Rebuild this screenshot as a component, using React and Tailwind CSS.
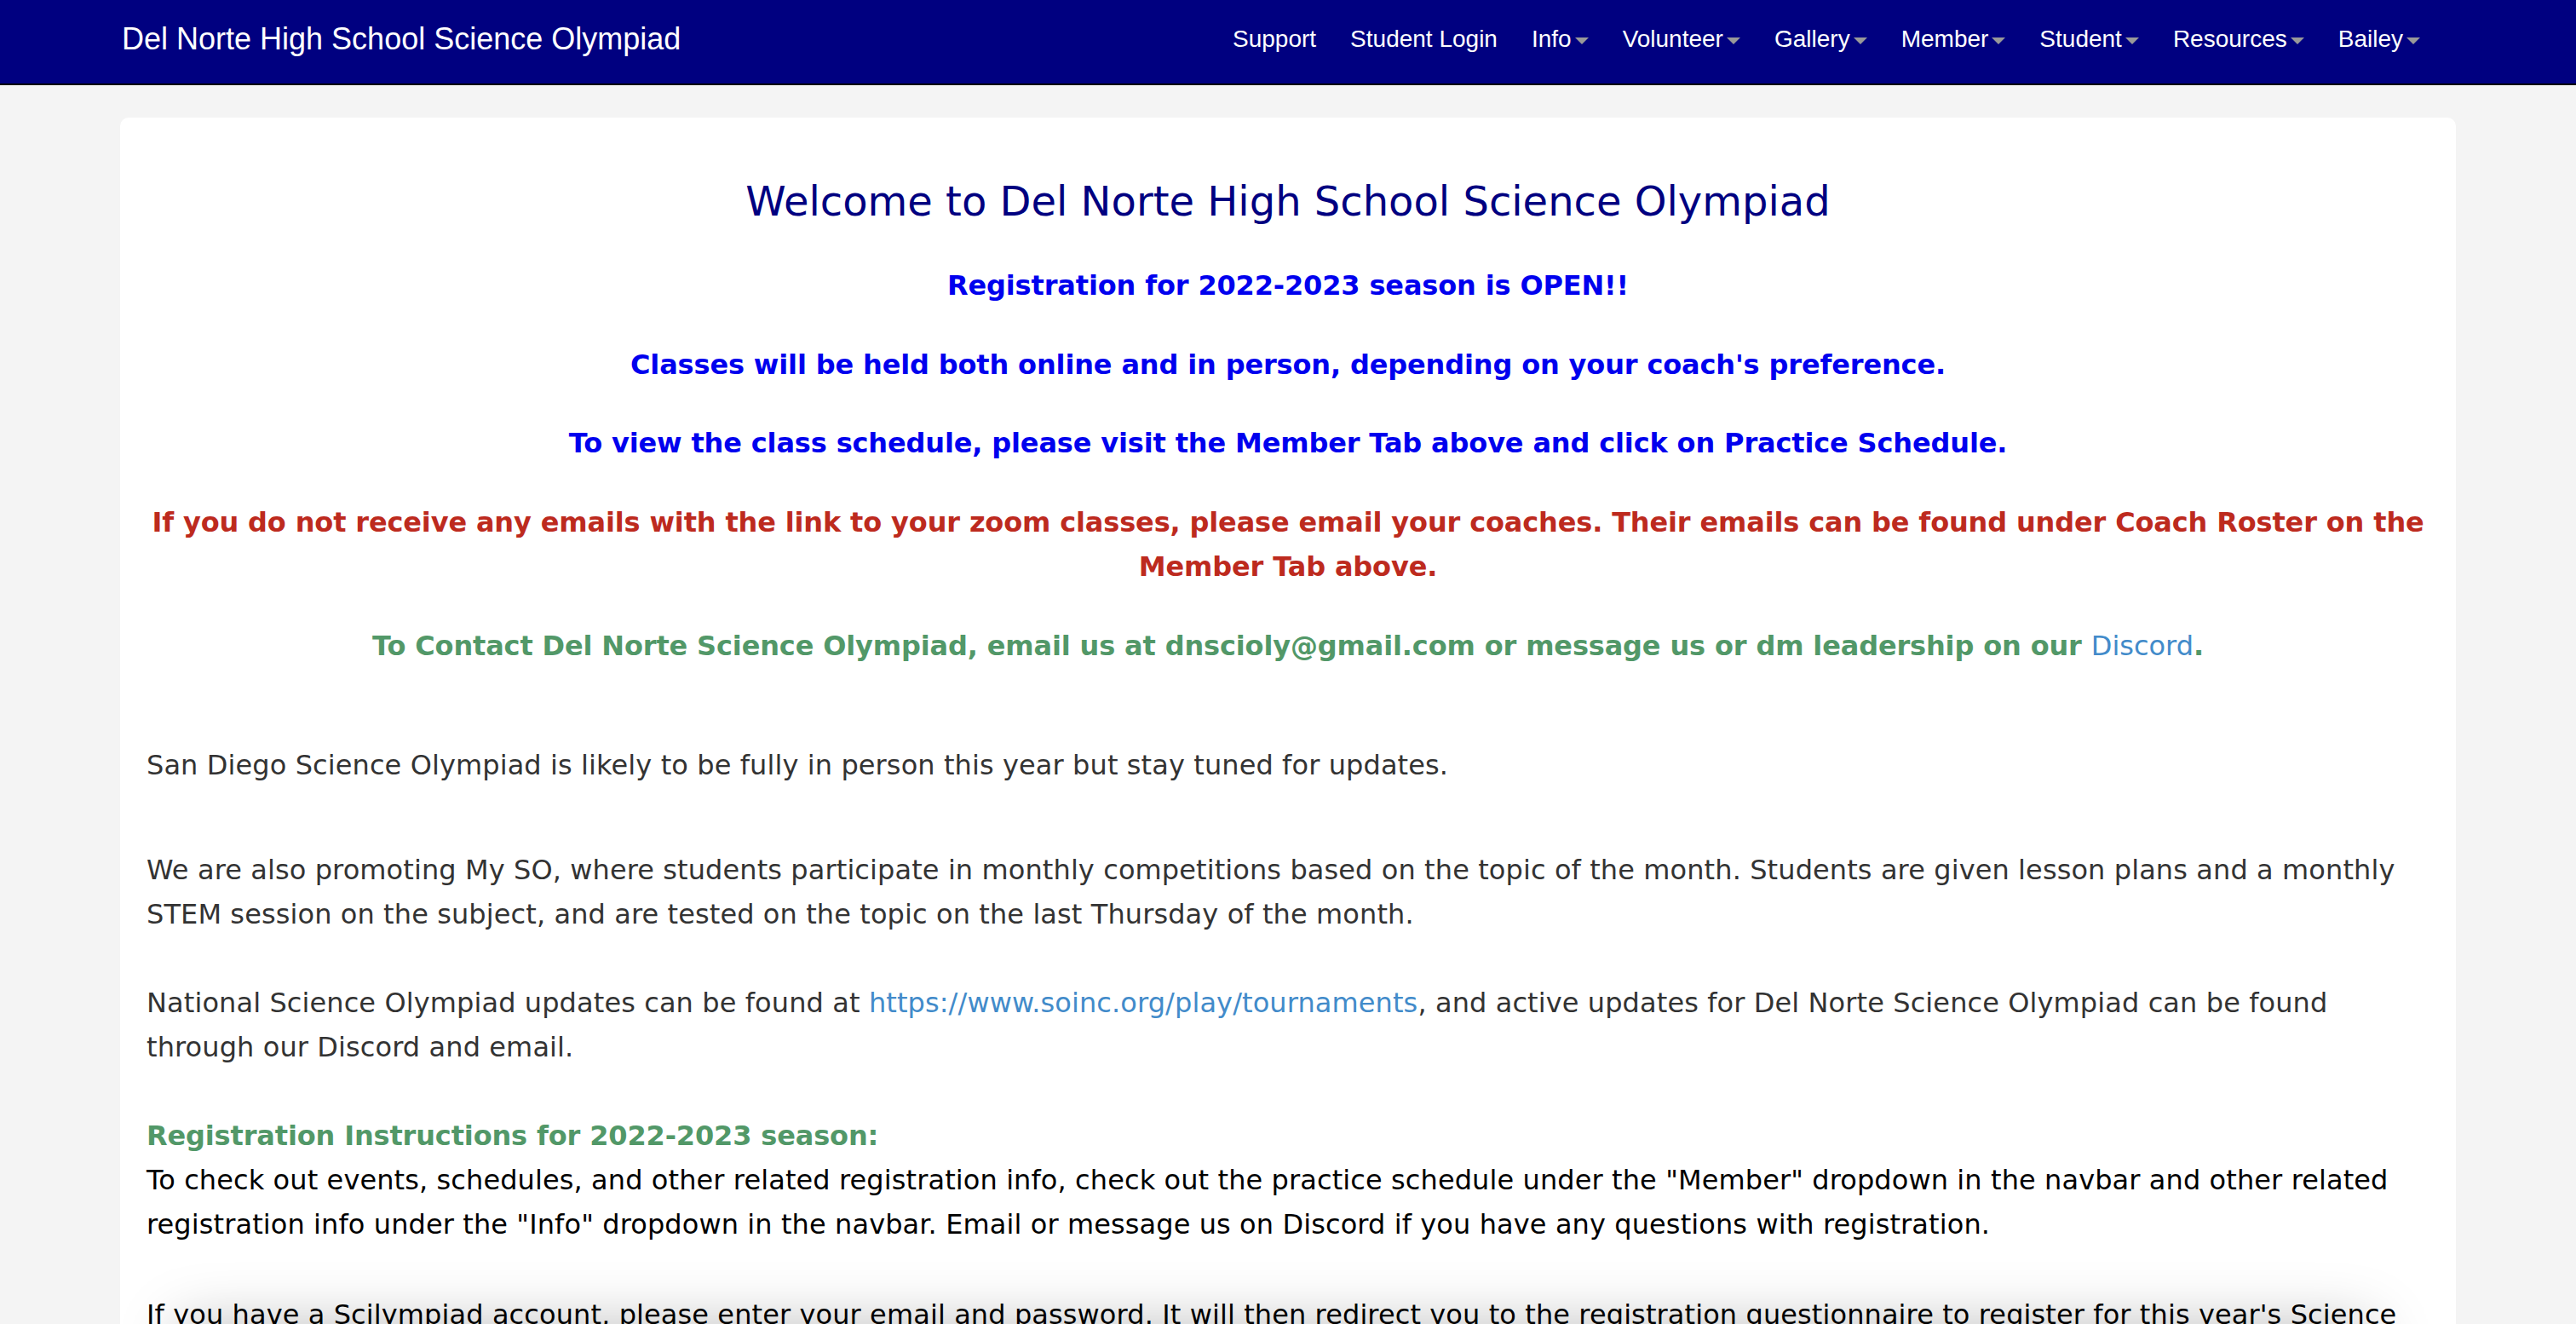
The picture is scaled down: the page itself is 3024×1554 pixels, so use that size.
const NAV = [
  { label: "Support" },
  { label: "Student Login" },
  { label: "Info", caret: true },
  { label: "Volunteer", caret: true },
  { label: "Gallery", caret: true },
  { label: "Member", caret: true },
  { label: "Student", caret: true },
  { label: "Resources", caret: true },
  { label: "Bailey", caret: true },
];

function Caret() {
  return (
    <span className="ml-[4px] inline-block h-0 w-0 align-middle border-t-[8px] border-t-[#999] border-x-[8px] border-x-transparent" />
  );
}

export default function App() {
  return (
    <div className="relative h-[1554px] overflow-hidden bg-[#f4f4f4] font-['DejaVu_Sans',Verdana,sans-serif]">
      {/* navbar */}
      <nav className="flex h-[100px] justify-between border-b-2 border-black bg-[#000080] pl-[143px] pr-[163px] font-['Liberation_Sans',Arial,sans-serif] text-white">
        <a className="pt-[26px] text-[36px] leading-[40px]">Del Norte High School Science Olympiad</a>
        <ul className="flex">
          {NAV.map((n) => (
            <li key={n.label} className="px-[20px] pt-[26px] text-[28px] leading-[40px]">
              {n.label}
              {n.caret && <Caret />}
            </li>
          ))}
        </ul>
      </nav>

      {/* main card */}
      <main className="mx-[141px] mt-[38px] rounded-[10px] bg-white px-[31px] pt-[72px] pb-[60px]">
        <div className="text-center">
          <h3 className="text-[48px] font-normal leading-[52px] text-[#000080]">
            Welcome to Del Norte High School Science Olympiad
          </h3>
          <div className="text-[32px] font-bold leading-[52px] tracking-[-0.15px]">
            <p className="mt-[47px] text-[#0000ee]">Registration for 2022-2023 season is OPEN!!</p>
            <p className="mt-[41px] text-[#0000ee]">
              Classes will be held both online and in person, depending on your coach's preference.
            </p>
            <p className="mt-[40px] text-[#0000ee]">
              To view the class schedule, please visit the Member Tab above and click on Practice Schedule.
            </p>
            <p className="mt-[41px] text-[#bd2a1e]">
              If you do not receive any emails with the link to your zoom classes, please email your coaches. Their emails can be found under Coach Roster on the Member Tab above.
            </p>
            <p className="mt-[41px] text-[#529868]">
              To Contact Del Norte Science Olympiad, email us at dnscioly@gmail.com or message us or dm leadership on our{" "}
              <a className="font-normal tracking-normal text-[#428bca]">Discord</a>.
            </p>
          </div>
        </div>

        <div className="text-[32px] leading-[52px] tracking-[0.1px] text-[#333]">
          <p className="mt-[88px]">
            San Diego Science Olympiad is likely to be fully in person this year but stay tuned for updates.
          </p>
          <p className="mt-[71px]">
            We are also promoting My SO, where students participate in monthly competitions based on the topic of the month. Students are given lesson plans and a monthly STEM session on the subject, and are tested on the topic on the last Thursday of the month.
          </p>
          <p className="mt-[52px]">
            National Science Olympiad updates can be found at{" "}
            <a className="text-[#428bca]">https://www.soinc.org/play/tournaments</a>, and active updates for Del Norte Science Olympiad can be found through our Discord and email.
          </p>
          <div className="mt-[52px] text-black">
            <h4 className="font-bold tracking-[-0.15px] text-[#529868]">Registration Instructions for 2022-2023 season:</h4>
            <p>
              To check out events, schedules, and other related registration info, check out the practice schedule under the "Member" dropdown in the navbar and other related registration info under the "Info" dropdown in the navbar. Email or message us on Discord if you have any questions with registration.
            </p>
            <p className="mt-[54px]">
              If you have a Scilympiad account, please enter your email and password. It will then redirect you to the registration questionnaire to register for this year's Science Olympiad.
            </p>
          </div>
        </div>
      </main>

      {/* shadow cast from below the viewport */}
      <div className="pointer-events-none absolute left-[240px] right-[270px] top-[1585px] h-[100px] shadow-[0_0_70px_30px_rgba(0,0,0,0.26)]" />
    </div>
  );
}
